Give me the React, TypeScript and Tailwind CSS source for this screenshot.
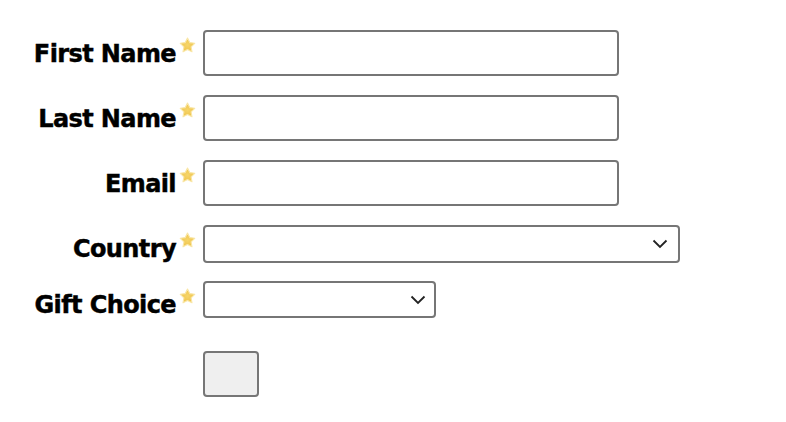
import React from "react";

function Star() {
  return (
    <svg width="17" height="17" viewBox="0 0 24 24" className="ml-[3px] mt-[7px] shrink-0">
      <defs>
        <radialGradient id="sg" cx="50%" cy="50%" r="55%">
          <stop offset="0%" stopColor="#f6d56a" />
          <stop offset="100%" stopColor="#eec146" />
        </radialGradient>
      </defs>
      <path
        d="M12 1.5l3.2 6.4 7 1-5.1 5 1.2 7-6.3-3.3-6.3 3.3 1.2-7-5.1-5 7-1z"
        fill="url(#sg)"
        stroke="#f9e6a6"
        strokeWidth="1.6"
        strokeLinejoin="round"
      />
    </svg>
  );
}

function Chevron() {
  return (
    <svg width="16" height="10" viewBox="0 0 16 10" className="shrink-0">
      <path d="M1.5 1.5L8 8l6.5-6.5" fill="none" stroke="#222" strokeWidth="1.8" />
    </svg>
  );
}

function Label({ text }: { text: string }) {
  return (
    <div className="w-[196px] flex justify-end items-start shrink-0">
      <span className="pt-[12px] text-[24px] font-bold text-black leading-none tracking-[-0.6px] [-webkit-text-stroke:0.45px_black]">
        {text}
      </span>
      <Star />
    </div>
  );
}

export default function App() {
  return (
    <div
      className="w-[786px] h-[422px] bg-white pt-[30px]"
      style={{ fontFamily: '"DejaVu Sans", Verdana, sans-serif' }}
    >
      <div className="flex flex-col">
        {["First Name", "Last Name", "Email"].map((l) => (
          <div key={l} className="flex items-start h-[65px]">
            <Label text={l} />
            <div className="ml-[7px] w-[416px] h-[46px] border-2 border-[#767676] rounded-[4px] bg-white" />
          </div>
        ))}
        <div className="flex items-start h-[56px]">
          <Label text="Country" />
          <div className="ml-[7px] w-[477px] h-[38px] border-2 border-[#767676] rounded-[4px] bg-white flex items-center justify-end pr-[10px]">
            <Chevron />
          </div>
        </div>
        <div className="flex items-start h-[70px]">
          <Label text="Gift Choice" />
          <div className="ml-[7px] w-[233px] h-[37px] border-2 border-[#767676] rounded-[4px] bg-white flex items-center justify-end pr-[8px]">
            <Chevron />
          </div>
        </div>
        <div className="flex">
          <div className="w-[196px] shrink-0" />
          <button className="ml-[7px] w-[56px] h-[46px] border-2 border-[#767676] rounded-[4px] bg-[#efefef]" />
        </div>
      </div>
    </div>
  );
}
